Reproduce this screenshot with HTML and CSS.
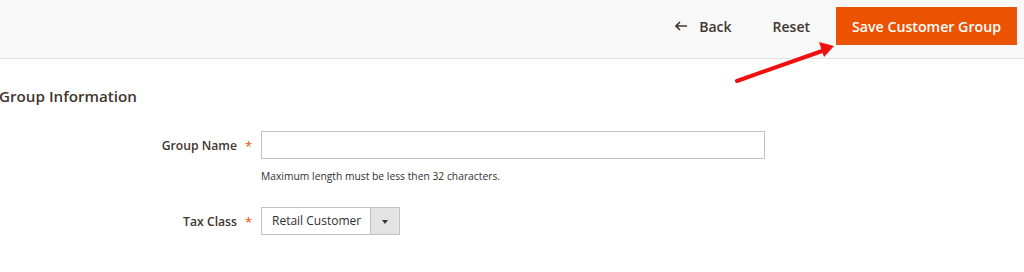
FILE: index.html
```html
<!DOCTYPE html>
<html>
<head>
<meta charset="utf-8">
<link rel="stylesheet" href="styles.css">
</head>
<body>
<header class="page-actions">
  <button class="action back" type="button">
    <svg class="back-icon" width="12" height="10" viewBox="0 0 12 10"><path d="M5 1 L1 5 L5 9 M1 5 H12" fill="none" stroke="#41362f" stroke-width="1.6"/></svg>
    <span>Back</span>
  </button>
  <button class="action reset" type="button">Reset</button>
  <button class="action primary" type="button">Save Customer Group</button>
</header>
<svg class="pointer" width="110" height="45" viewBox="0 0 110 45">
  <line x1="2" y1="41" x2="90" y2="10" stroke="#f0100f" stroke-width="4" stroke-linecap="round"/>
  <polygon points="99,6 84,2 89,17" fill="#f0100f"/>
</svg>
<main class="content">
  <h2 class="legend">Group Information</h2>
  <div class="field">
    <label class="label required">Group Name</label>
    <div class="control">
      <input class="input-text" type="text">
      <div class="note">Maximum length must be less then 32 characters.</div>
    </div>
  </div>
  <div class="field field-select">
    <label class="label required">Tax Class</label>
    <div class="control">
      <div class="select">
        <span class="select-value">Retail Customer</span>
        <span class="select-toggle"><span class="caret"></span></span>
      </div>
    </div>
  </div>
</main>
</body>
</html>
```
FILE: styles.css
```css
html, body {
  margin: 0;
  padding: 0;
  background: #ffffff;
  font-family: "Open Sans", "Noto Sans", sans-serif;
  color: #41362f;
  width: 1024px;
  height: 272px;
  overflow: hidden;
  position: relative;
}

.page-actions {
  display: flex;
  justify-content: flex-end;
  align-items: flex-start;
  height: 51px;
  padding: 7px 7px 0 0;
  background: #f8f8f8;
  border-bottom: 1px solid #e3e3e3;
  box-sizing: content-box;
}

.action {
  font-family: inherit;
  font-size: 14px;
  font-weight: 600;
  color: #41362f;
  background: transparent;
  border: 0;
  height: 38px;
  padding: 0;
  display: flex;
  align-items: center;
  cursor: pointer;
}

.back {
  gap: 12px;
  margin-right: 41px;
}

.back-icon {
  display: block;
}

.reset {
  margin-right: 26px;
}

.primary {
  background: #eb5202;
  border: 1px solid #e3550c;
  color: #ffffff;
  width: 181px;
  font-size: 14.2px;
  justify-content: center;
}

.pointer {
  position: absolute;
  left: 735px;
  top: 40px;
}

.content {
  padding: 0;
}

.legend {
  margin: 26px 0 0 -1px;
  font-size: 15.2px;
  font-weight: 600;
  line-height: 22px;
  color: #41362f;
}

.field {
  display: flex;
  align-items: flex-start;
  margin-top: 24px;
}

.label {
  width: 237px;
  text-align: right;
  font-size: 12.2px;
  font-weight: 600;
  color: #41362f;
  line-height: 29px;
  flex-shrink: 0;
  position: relative;
}

.label.required::after {
  content: "*";
  color: #eb5202;
  font-size: 13px;
  font-weight: 400;
  position: absolute;
  left: 245px;
  top: 1px;
}

.control {
  margin-left: 24px;
}

.input-text {
  display: block;
  width: 504px;
  height: 28px;
  box-sizing: border-box;
  border: 1px solid #c2c2c2;
  margin: 0;
  padding: 0 8px;
  font-family: inherit;
  font-size: 13px;
}

.note {
  font-size: 10.3px;
  color: #303030;
  margin-top: 9px;
  line-height: 16px;
}

.field-select {
  margin-top: 23px;
}

.select {
  display: flex;
  width: 139px;
  height: 28px;
  box-sizing: border-box;
  border: 1px solid #c2c2c2;
}

.select-value {
  flex: 1;
  font-size: 12px;
  line-height: 26px;
  padding-left: 10px;
  color: #303030;
  background: #fff;
}

.select-toggle {
  width: 28px;
  background: #e3e3e3;
  border-left: 1px solid #c2c2c2;
  display: flex;
  align-items: center;
  justify-content: center;
}

.caret {
  width: 0;
  height: 0;
  border-left: 3.5px solid transparent;
  border-right: 3.5px solid transparent;
  border-top: 4px solid #41362f;
  margin-top: 1px;
}
```
